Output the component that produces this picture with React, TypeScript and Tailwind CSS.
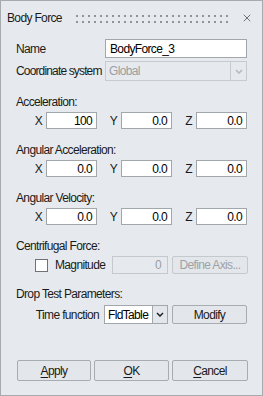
import { X } from "lucide-react";

type NumProps = {
  value: string;
};

function NumInput({ value }: NumProps) {
  return (
    <div className="w-[51px] h-[17px] bg-white border border-[#a2a7ac] flex items-center justify-end pr-[4px] text-black leading-none">
      {value}
    </div>
  );
}

function VecRow({ values }: { values: string[] }) {
  const axes = ["X", "Y", "Z"];

  return (
    <div className="flex h-[17px] mt-[3px] pl-[21px]">
      {axes.map((a, i) => (
        <div key={a} className="flex items-center">
          <span className="w-[24px] text-right pr-[4px] leading-none">{a}</span>
          <NumInput value={values[i]} />
        </div>
      ))}
    </div>
  );
}

function SectionLabel({ text, top }: { text: string; top: string }) {
  return (
    <div className={`h-[14px] leading-[14px] pl-[15px] ${top}`}>{text}</div>
  );
}

function Chevron({ color }: { color: string }) {
  return (
    <svg width="8" height="5" viewBox="0 0 8 5">
      <path d="M1 1 L4 4 L7 1" fill="none" stroke={color} strokeWidth="1.5" />
    </svg>
  );
}

function Btn({ children, w, disabled }: { children: React.ReactNode; w: string; disabled?: boolean }) {
  return (
    <div
      className={`${w} h-full flex items-center justify-center rounded-[2px] border bg-[#e3e7eb] leading-none ${
        disabled ? "border-[#c4c9cd] text-[#9ea2a6]" : "border-[#a7acb1] text-[#1a1a1a]"
      }`}
    >
      {children}
    </div>
  );
}

export default function App() {
  return (
    <div className="w-[263px] h-[396px] bg-[#e6eaee] border border-[#a6abb0] flex flex-col text-[12px] tracking-[-0.65px] whitespace-nowrap text-[#1a1a1a] font-['Liberation_Sans',Arial,sans-serif]">

      {/* title bar */}
      <div className="h-[34px] flex items-center pl-[6px] pr-[9px]">
        <span className="w-[69px] leading-none">Body Force</span>
        <div className="grid grid-cols-[repeat(26,2px)] gap-x-[4px] gap-y-[4px] mt-[2px]">
          {Array.from({ length: 52 }).map((_, i) => (
            <div key={i} className="w-[2px] h-[2px] bg-[#8e9398]" />
          ))}
        </div>
        <X size={12} strokeWidth={1.5} className="ml-auto text-[#4a4a4a]" />
      </div>

      {/* name */}
      <div className="flex items-center h-[19px] mt-[4px] pl-[15px] pr-[15px]">
        <span className="flex-1 leading-none">Name</span>
        <div className="w-[142px] h-full bg-white border border-[#a2a7ac] flex items-center pl-[4px] text-black leading-none">
          BodyForce_3
        </div>
      </div>

      {/* coordinate system */}
      <div className="flex items-center h-[20px] mt-[3px] pl-[15px] pr-[15px]">
        <span className="flex-1 leading-none tracking-[-0.85px]">Coordinate system</span>
        <div className="w-[142px] h-full border border-[#c6cbcf] flex">
          <div className="flex-1 flex items-center pl-[3px] text-[#9a9ea2] leading-none">Global</div>
          <div className="w-[16px] border-l border-[#c6cbcf] flex items-center justify-center">
            <Chevron color="#b4b8bc" />
          </div>
        </div>
      </div>

      <SectionLabel text="Acceleration:" top="mt-[14px]" />
      <VecRow values={["100", "0.0", "0.0"]} />

      <SectionLabel text="Angular Acceleration:" top="mt-[14px]" />
      <VecRow values={["0.0", "0.0", "0.0"]} />

      <SectionLabel text="Angular Velocity:" top="mt-[14px]" />
      <VecRow values={["0.0", "0.0", "0.0"]} />

      <SectionLabel text="Centrifugal Force:" top="mt-[14px]" />
      <div className="flex items-center h-[18px] mt-[3px] pl-[34px] pr-[14px]">
        <div className="w-[13px] h-[13px] bg-white border border-[#6f7377]" />
        <span className="ml-[7px] leading-none">Magnitude</span>
        <div className="ml-auto w-[56px] h-full border border-[#c4c9cd] flex items-center justify-end pr-[6px] text-[#9a9ea2] leading-none">
          0
        </div>
        <div className="ml-[4px] h-full">
          <Btn w="w-[76px]" disabled>
            Define Axis...
          </Btn>
        </div>
      </div>

      <SectionLabel text="Drop Test Parameters:" top="mt-[13px]" />
      <div className="flex items-center justify-end h-[19px] mt-[4px] pr-[15px]">
        <span className="leading-none">Time function</span>
        <div className="ml-[5px] h-full flex">
          <div className="w-[49px] h-full bg-white border border-[#a2a7ac] flex items-center pl-[3px] text-black leading-none">
            FldTable
          </div>
          <div className="w-[15px] h-full border border-l-0 border-[#a2a7ac] bg-[#e3e7eb] flex items-center justify-center">
            <Chevron color="#222" />
          </div>
        </div>
        <div className="ml-[4px] h-full">
          <Btn w="w-[75px]">Modify</Btn>
        </div>
      </div>

      {/* footer buttons */}
      <div className="mt-auto mb-[14px] h-[21px] flex gap-[3px] pl-[16px]">
        <Btn w="w-[74px]">
          <span>
            <span className="underline underline-offset-2">A</span>pply
          </span>
        </Btn>
        <Btn w="w-[75px]">
          <span>
            <span className="underline underline-offset-2">O</span>K
          </span>
        </Btn>
        <Btn w="w-[76px]">
          <span>
            <span className="underline underline-offset-2">C</span>ancel
          </span>
        </Btn>
      </div>
    </div>
  );
}
